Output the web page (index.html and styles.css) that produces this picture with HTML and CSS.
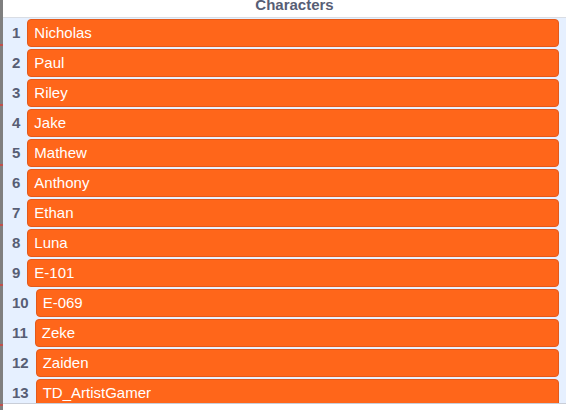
FILE: index.html
```html
<!DOCTYPE html>
<html>
<head>
<meta charset="utf-8">
<link rel="stylesheet" href="styles.css">
</head>
<body>
<div class="page">
  <div class="strip"></div>
  <div class="monitor">
    <div class="header"><span class="title">Characters</span></div>
    <div class="list">
      <div class="row"><span class="index">1</span><div class="item">Nicholas</div></div>
      <div class="row"><span class="index">2</span><div class="item">Paul</div></div>
      <div class="row"><span class="index">3</span><div class="item">Riley</div></div>
      <div class="row"><span class="index">4</span><div class="item">Jake</div></div>
      <div class="row"><span class="index">5</span><div class="item">Mathew</div></div>
      <div class="row"><span class="index">6</span><div class="item">Anthony</div></div>
      <div class="row"><span class="index">7</span><div class="item">Ethan</div></div>
      <div class="row"><span class="index">8</span><div class="item">Luna</div></div>
      <div class="row"><span class="index">9</span><div class="item">E-101</div></div>
      <div class="row"><span class="index">10</span><div class="item">E-069</div></div>
      <div class="row"><span class="index">11</span><div class="item">Zeke</div></div>
      <div class="row"><span class="index">12</span><div class="item">Zaiden</div></div>
      <div class="row"><span class="index">13</span><div class="item">TD_ArtistGamer</div></div>
    </div>
  </div>
</div>
</body>
</html>
```
FILE: styles.css
```css
html, body {
  margin: 0;
  padding: 0;
  background: #ffffff;
  font-family: "Liberation Sans", Arial, sans-serif;
}
.page {
  display: flex;
  width: 569px;
  height: 410px;
  overflow: hidden;
}
.strip {
  width: 3px;
  flex: none;
  background: repeating-linear-gradient(to bottom, #7f7f7f 0, #7f7f7f 44px, #c0504d 44px, #c0504d 46px, #7f7f7f 46px, #7f7f7f 60px);
}
.monitor {
  width: 563px;
  flex: none;
  display: flex;
  flex-direction: column;
}
.header {
  box-sizing: border-box;
  height: 18px;
  border-bottom: 1px solid #d9dde4;
  background: #ffffff;
  text-align: center;
  overflow: hidden;
  padding-left: 20px;
}
.title {
  display: block;
  font-size: 15px;
  font-weight: bold;
  line-height: 9px;
  color: #575e75;
}
.list {
  box-sizing: border-box;
  height: 386px;
  background: #e6f0ff;
  padding-top: 1px;
  overflow: hidden;
  border-bottom: 1px solid #c9ced8;
}
.row {
  display: flex;
  height: 28px;
  margin-bottom: 2px;
}
.index {
  flex: none;
  padding: 0 7px 0 9px;
  font-size: 15px;
  font-weight: bold;
  line-height: 28px;
  color: #575e75;
}
.item {
  box-sizing: border-box;
  flex: 1;
  margin-right: 7px;
  height: 28px;
  background: #ff661a;
  border: 1px solid #e3591a;
  border-radius: 4px;
  color: #ffffff;
  font-size: 15px;
  line-height: 26px;
  padding-left: 6px;
  white-space: nowrap;
  overflow: hidden;
}
```
